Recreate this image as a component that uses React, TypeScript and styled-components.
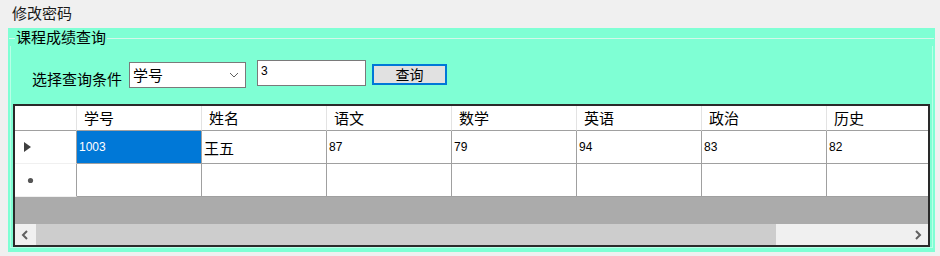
import { FunctionComponent } from "react";
import styled, { createGlobalStyle } from "styled-components";

const GlobalStyle = createGlobalStyle`
  html, body {
    margin: 0;
    padding: 0;
    background: #f0f0f0;
  }
  body {
    font-family: "Noto Sans CJK SC", "Noto Sans", sans-serif;
    color: #000;
  }
`;

const Page = styled.div`
  width: 940px;
  height: 256px;
  overflow: hidden;
  background: #f0f0f0;
`;
const FormTitle = styled.div`
  height: 28px;
  padding-left: 12px;
  font-size: 15px;
  line-height: 26px;
  color: #1a1a1a;
`;
const Panel = styled.div`
  margin-left: 8px;
  width: 927px;
  height: 224px;
  background: #7fffd4;
  box-sizing: border-box;
  padding: 0 2px 5px 2px;
  display: flex;
  flex-direction: column;
`;
const GroupBox = styled.div`
  flex: 1;
  display: flex;
  flex-direction: column;
  border: 1px solid rgba(255, 255, 255, 0.45);
  border-top: none;
`;
const GroupHeader = styled.div`
  height: 18px;
  display: flex;
  align-items: center;
  margin-left: -1px;
  margin-right: -1px;
`;
const GroupLine = styled.div<{ $grow?: boolean }>`
  height: 1px;
  background: #d4f7ea;
  width: ${(p) => (p.$grow ? "auto" : "6px")};
  flex: ${(p) => (p.$grow ? 1 : "none")};
  margin-top: 2px;
`;
const GroupTitle = styled.span`
  font-size: 15px;
  line-height: 18px;
  padding: 0 1px;
`;
const QueryRow = styled.div`
  display: flex;
  align-items: flex-start;
  height: 28px;
  margin-top: 14px;
  padding-left: 21px;
`;
const FieldLabel = styled.span`
  font-size: 15px;
  line-height: 18px;
  margin-top: 10px;
  margin-right: 7px;
`;
const ComboBox = styled.div`
  width: 117px;
  height: 26px;
  margin-top: 2px;
  box-sizing: border-box;
  border: 1px solid #7a7a7a;
  background: #fff;
  display: flex;
  align-items: center;
  justify-content: space-between;
  padding: 0 6px 0 3px;
  font-size: 15px;
  line-height: 18px;
`;
const TextBox = styled.div`
  width: 109px;
  height: 26px;
  margin-left: 11px;
  box-sizing: border-box;
  border: 1px solid #7a7a7a;
  background: #fff;
  padding: 2px 3px;
  font-family: "Liberation Sans", Arial, sans-serif;
  font-size: 12px;
  line-height: 16px;
`;
const QueryButton = styled.button`
  width: 75px;
  height: 21px;
  margin-top: 4px;
  margin-left: 6px;
  box-sizing: border-box;
  border: 2px solid #0078d7;
  background: #e1e1e1;
  font-family: "Noto Sans CJK SC", sans-serif;
  font-size: 14px;
  line-height: 15px;
  padding: 0;
  color: #000;
`;
const Grid = styled.div`
  margin-top: 16px;
  margin-left: 2px;
  width: 917px;
  height: 143px;
  box-sizing: border-box;
  border: 2px solid #2a2a2a;
  background: #ababab;
  display: flex;
  flex-direction: column;
  overflow: hidden;
`;
const GridRow = styled.div<{ $h: number }>`
  display: flex;
  height: ${(p) => p.$h}px;
  flex: none;
`;
const RowHeader = styled.div<{ $header?: boolean }>`
  width: 62px;
  flex: none;
  box-sizing: border-box;
  background: #fff;
  border-right: 1px solid ${(p) => (p.$header ? "#e3e3e3" : "#a0a0a0")};
  border-bottom: 1px solid ${(p) => (p.$header ? "#a0a0a0" : "#f0f0f0")};
  display: flex;
  align-items: center;
  padding-left: 9px;
`;
const HeadCell = styled.div`
  width: 125px;
  flex: none;
  box-sizing: border-box;
  background: #fff;
  border-right: 1px solid #e3e3e3;
  border-bottom: 1px solid #a0a0a0;
  padding-left: 7px;
  font-size: 15px;
  line-height: 24px;
  white-space: nowrap;
`;
const Cell = styled.div<{ $selected?: boolean; $cjk?: boolean }>`
  width: 125px;
  flex: none;
  box-sizing: border-box;
  background: ${(p) => (p.$selected ? "#0078d7" : "#fff")};
  color: ${(p) => (p.$selected ? "#fff" : "#000")};
  border-right: 1px solid #a0a0a0;
  border-bottom: 1px solid #a0a0a0;
  padding-left: 2px;
  display: flex;
  align-items: center;
  font-family: ${(p) =>
    p.$cjk ? `"Noto Sans CJK SC", sans-serif` : `"Liberation Sans", Arial, sans-serif`};
  font-size: ${(p) => (p.$cjk ? "15px" : "12px")};
  white-space: nowrap;
`;
const Filler = styled.div`
  flex: 1;
  background: #ababab;
`;
const ScrollBar = styled.div`
  height: 21px;
  flex: none;
  display: flex;
  background: #f0f0f0;
`;
const ScrollArrow = styled.div`
  width: 20px;
  flex: none;
  display: flex;
  align-items: center;
  justify-content: center;
`;
const ScrollTrack = styled.div`
  flex: 1;
  display: flex;
  align-items: stretch;
  padding: 0 1px;
`;
const ScrollThumb = styled.div`
  width: 740px;
  background: #cdcdcd;
`;

const columns = ["学号", "姓名", "语文", "数学", "英语", "政治", "历史"];
const row = ["1003", "王五", "87", "79", "94", "83", "82"];

const App: FunctionComponent = () => {
  return (
    <Page>
      <GlobalStyle />
      <FormTitle>修改密码</FormTitle>
      <Panel>
        <GroupHeader>
          <GroupLine />
          <GroupTitle>课程成绩查询</GroupTitle>
          <GroupLine $grow />
        </GroupHeader>
        <GroupBox>
          <QueryRow>
            <FieldLabel>选择查询条件</FieldLabel>
            <ComboBox>
              <span>学号</span>
              <svg width="10" height="6" viewBox="0 0 10 6">
                <polyline points="1,1 5,5 9,1" fill="none" stroke="#606060" strokeWidth="1" />
              </svg>
            </ComboBox>
            <TextBox>3</TextBox>
            <QueryButton>查询</QueryButton>
          </QueryRow>
          <Grid>
            <GridRow $h={25}>
              <RowHeader $header />
              {columns.map((c) => (
                <HeadCell key={c}>{c}</HeadCell>
              ))}
            </GridRow>
            <GridRow $h={33}>
              <RowHeader>
                <svg width="7" height="10" viewBox="0 0 7 10">
                  <polygon points="0,0 7,5 0,10" fill="#404040" />
                </svg>
              </RowHeader>
              {row.map((v, i) => (
                <Cell key={i} $selected={i === 0} $cjk={i === 1}>
                  {v}
                </Cell>
              ))}
            </GridRow>
            <GridRow $h={33}>
              <RowHeader>
                <svg width="7" height="7" viewBox="0 0 7 7" style={{ marginLeft: 3 }}>
                  <circle cx="3.5" cy="3.5" r="2.6" fill="#555" />
                </svg>
              </RowHeader>
              {columns.map((c) => (
                <Cell key={c} />
              ))}
            </GridRow>
            <Filler />
            <ScrollBar>
              <ScrollArrow>
                <svg width="8" height="10" viewBox="0 0 8 10">
                  <polyline points="6,1 2,5 6,9" fill="none" stroke="#606060" strokeWidth="2" />
                </svg>
              </ScrollArrow>
              <ScrollTrack>
                <ScrollThumb />
              </ScrollTrack>
              <ScrollArrow>
                <svg width="8" height="10" viewBox="0 0 8 10">
                  <polyline points="2,1 6,5 2,9" fill="none" stroke="#606060" strokeWidth="2" />
                </svg>
              </ScrollArrow>
            </ScrollBar>
          </Grid>
        </GroupBox>
      </Panel>
    </Page>
  );
};

export default App;
